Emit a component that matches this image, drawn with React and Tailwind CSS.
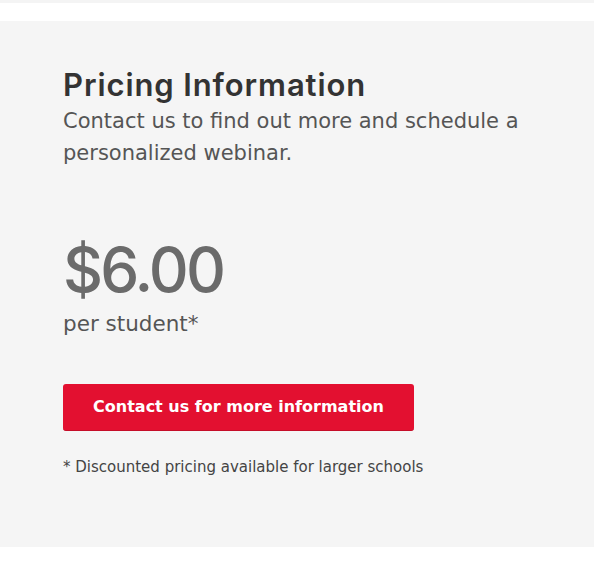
import React from 'react';

const font = { fontFamily: '"DejaVu Sans", "Noto Sans", sans-serif' };
const inter = { fontFamily: 'Inter, "Noto Sans", sans-serif' };

export default function App() {
  return (
    <div className="min-h-screen bg-white" style={font}>
      {/* top strip */}
      <div className="h-[3px] bg-[#f4f4f4]" />
      <div className="h-[18px] bg-white" />

      <section className="bg-[#f5f5f5] px-[63px] pt-[47px] h-[526px]">
        <h2 className="text-[31px] leading-[34px] font-semibold text-[#333] tracking-[0.9px]" style={inter}>
          Pricing Information
        </h2>
        <p className="mt-[3px] text-[21px] leading-[32px] text-[#555] max-w-[480px]">
          Contact us to find out more and schedule a personalized webinar.
        </p>

        <div className="mt-[67px] text-[62px] leading-[68px] font-medium text-[#6b6b6b] tracking-[-2.8px]" style={inter}>
          $6.00
        </div>
        <div className="mt-[6px] text-[21.5px] leading-[28px] text-[#555]">per student*</div>

        <button className="mt-[46px] w-[351px] h-[47px] rounded-[3px] bg-[#e31030] border-b border-[#c50d28] text-white text-[16px] font-bold">
          Contact us for more information
        </button>

        <p className="mt-[26px] text-[15px] leading-[20px] text-[#444]">
          * Discounted pricing available for larger schools
        </p>
      </section>
    </div>
  );
}
